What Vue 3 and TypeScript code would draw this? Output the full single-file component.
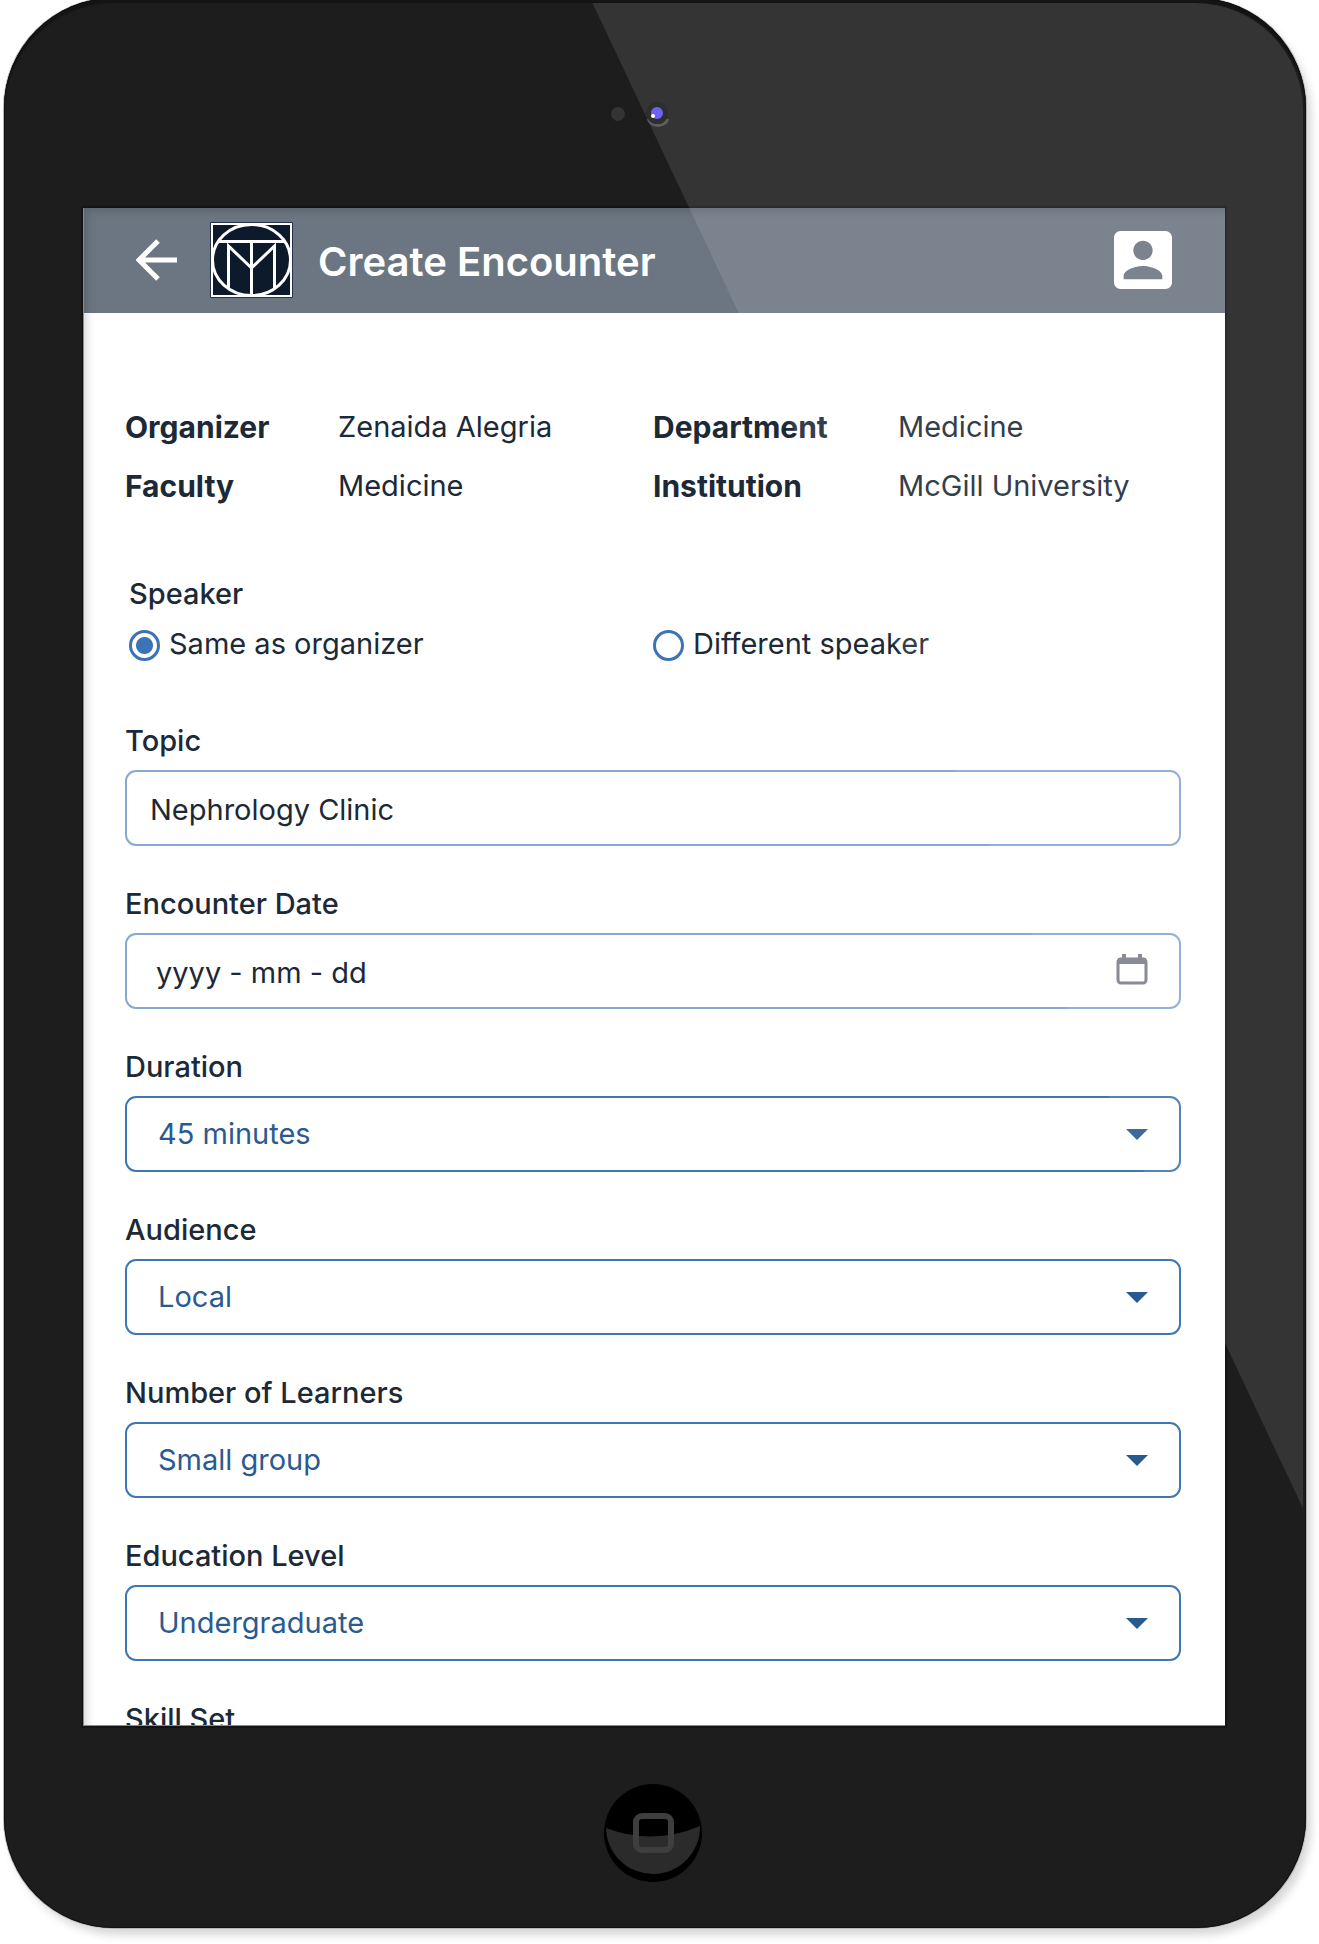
<script setup lang="ts">
import { ref } from 'vue'

interface Detail {
  label: string
  value: string
}

interface SelectField {
  id: string
  label: string
  options: string[]
  value: string
}

const details: Detail[] = [
  { label: 'Organizer', value: 'Zenaida Alegria' },
  { label: 'Department', value: 'Medicine' },
  { label: 'Faculty', value: 'Medicine' },
  { label: 'Institution', value: 'McGill University' },
]

const speaker = ref('same')
const topic = ref('Nephrology Clinic')
const date = ref('')

const selects = ref<SelectField[]>([
  { id: 'duration', label: 'Duration', options: ['45 minutes'], value: '45 minutes' },
  { id: 'audience', label: 'Audience', options: ['Local'], value: 'Local' },
  { id: 'learners', label: 'Number of Learners', options: ['Small group'], value: 'Small group' },
  { id: 'level', label: 'Education Level', options: ['Undergraduate'], value: 'Undergraduate' },
  { id: 'skills', label: 'Skill Set', options: [''], value: '' },
])
</script>

<template>
  <div class="device">
    <div class="bezel-top">
      <svg class="camera" viewBox="0 0 110 30" aria-hidden="true">
        <circle cx="17" cy="15" r="7" fill="#333" />
        <path d="M47 20a11 11 0 0 0 20 0" fill="none" stroke="#4c4c4a" stroke-width="3" />
        <circle cx="56" cy="14" r="11" fill="#171619" />
        <circle cx="56" cy="14" r="6" fill="#5c52f0" />
        <circle cx="52" cy="17" r="2" fill="#fff" />
      </svg>
    </div>

    <main class="screen">
      <header class="bar">
        <button class="back" type="button" aria-label="Back">
          <svg viewBox="0 0 42 42">
            <path d="M41 21H5M22 2 3 21l19 19" fill="none" stroke="#fff" stroke-width="5" />
          </svg>
        </button>
        <svg class="logo" viewBox="0 0 83 76" aria-hidden="true">
          <rect width="83" height="76" rx="1" fill="#26324a" />
          <rect x="2" y="2" width="79" height="72" fill="#0d1a2b" stroke="#fff" stroke-width="2" />
          <g fill="none" stroke="#fff" stroke-width="3">
            <ellipse cx="41.500" cy="38" rx="39" ry="35.500" />
            <path d="M8 19.500H75M41.500 19.500V73M18.500 66V24l23 22 23-22v42" />
          </g>
        </svg>
        <h1>Create Encounter</h1>
        <button class="account" type="button" aria-label="Account">
          <svg viewBox="3 3 18 18">
            <path
              fill="#fff"
              d="M3 5v14a2 2 0 0 0 2 2h14c1.100 0 2-.900 2-2V5a2 2 0 0 0-2-2H5a2 2 0 0 0-2 2zm12 4c0 1.660-1.340 3-3 3s-3-1.340-3-3 1.340-3 3-3 3 1.340 3 3zm-9 8c0-2 4-3.100 6-3.100s6 1.100 6 3.100v1H6v-1z"
            />
          </svg>
        </button>
      </header>

      <form class="form" @submit.prevent>
        <dl class="details">
          <template v-for="d in details" :key="d.label">
            <dt>{{ d.label }}</dt>
            <dd>{{ d.value }}</dd>
          </template>
        </dl>

        <fieldset class="speaker">
          <legend>Speaker</legend>
          <div class="choices">
            <label>
              <input v-model="speaker" type="radio" name="speaker" value="same" />
              <span>Same as organizer</span>
            </label>
            <label>
              <input v-model="speaker" type="radio" name="speaker" value="different" />
              <span>Different speaker</span>
            </label>
          </div>
        </fieldset>

        <div class="field">
          <label for="topic">Topic</label>
          <input id="topic" v-model="topic" class="box" type="text" />
        </div>

        <div class="field">
          <label for="date">Encounter Date</label>
          <div class="control">
            <input id="date" v-model="date" class="box date" type="text" placeholder="yyyy - mm - dd" />
            <button class="calendar" type="button" aria-label="Choose a date">
              <svg viewBox="0 0 32 32">
                <rect x="2" y="6" width="28" height="24" rx="3" fill="none" stroke="#7b7d88" stroke-width="3" />
                <path d="M2 5h28v6H2zM6 1h4v5H6zM22 1h4v5h-4z" fill="#7b7d88" />
              </svg>
            </button>
          </div>
        </div>

        <div v-for="s in selects" :key="s.id" class="field">
          <label :for="s.id">{{ s.label }}</label>
          <div class="control">
            <select :id="s.id" v-model="s.value" class="box select">
              <option v-for="o in s.options" :key="o" :value="o">{{ o }}</option>
            </select>
            <svg class="arrow" viewBox="0 0 22 11" aria-hidden="true">
              <path d="M0 0h22L11 11z" fill="#285a92" />
            </svg>
          </div>
        </div>
      </form>
    </main>

    <div class="bezel-bottom">
      <button class="home" type="button" aria-label="Home">
        <svg viewBox="0 0 98 98">
          <circle cx="49" cy="49" r="49" fill="#000" />
          <path d="M2 44Q49 62 96 42A47 47 0 1 1 2 44z" fill="#2b2b2b" />
          <rect x="32" y="32" width="35" height="34" rx="6" fill="none" stroke="#3e3e3e" stroke-width="6" />
        </svg>
      </button>
    </div>

    <div class="glare"></div>
  </div>
</template>

<style>
body {
  min-height: 100vh;
  background: #fff;
}
</style>

<style scoped>
.device {
  position: relative;
  box-sizing: border-box;
  margin: -2px 13px 0 4px;
  padding: 0 81px 0 79px;
  border-radius: 110px;
  background: #1d1d1d;
  box-shadow:
    inset 0 0 0 1px #111,
    inset 0 5px 1px #141414,
    0 0 0 1px #b5b5b5,
    5px 7px 8px rgba(0, 0, 0, 0.16);
  color: #1c2937;
  font-family: Inter, "Liberation Sans", sans-serif;
  font-size: 29px;
  line-height: 40px;
}

.bezel-top {
  display: flex;
  justify-content: center;
  height: 210px;
  padding-left: 4px;
}

.camera {
  width: 110px;
  height: 30px;
  margin-top: 101px;
}

.screen {
  position: relative;
  aspect-ratio: 1142 / 1518;
  overflow: hidden;
  background: #fff;
  box-shadow: 0 0 0 2px #141414;
}

.screen::after {
  content: "";
  position: absolute;
  inset: 0;
  box-shadow:
    inset 1px -1px 0 #8a8a8a,
    inset 6px 5px 9px -2px rgba(0, 0, 0, 0.16);
  pointer-events: none;
}

.bar {
  display: flex;
  align-items: center;
  box-sizing: border-box;
  height: 105px;
  padding: 0 53px 2px;
  background: #6c7682;
}

button {
  padding: 0;
  border: 0;
  background: none;
}

button svg {
  display: block;
  width: 100%;
  height: 100%;
}

.back {
  width: 42px;
  height: 42px;
}

.logo {
  width: 83px;
  height: 76px;
  margin: 0 25px 0 32px;
}

h1 {
  flex: 1;
  margin: 0;
  padding-top: 4px;
  color: #fff;
  font-size: 40px;
  font-weight: 600;
  line-height: 48px;
}

.account {
  width: 58px;
  height: 58px;
}

.form {
  padding: 84px 44px 0 42px;
}

.details {
  display: grid;
  grid-template-columns: 213fr 315fr 245fr 283fr;
  row-gap: 19px;
  margin: 0;
  padding-top: 10px;
}

dt {
  font-size: 30px;
  font-weight: 700;
}

dd {
  margin: 0;
}

.speaker {
  min-width: 0;
  margin: 68px 0 57px;
  padding: 0;
  border: 0;
}

legend {
  padding: 0 4px;
  font-weight: 500;
}

.choices {
  display: grid;
  grid-template-columns: 1fr 1fr;
  margin-top: 10px;
}

.choices label {
  display: flex;
  align-items: center;
  gap: 9px;
}

.choices label:first-child {
  padding-left: 4px;
}

input[type="radio"] {
  appearance: none;
  box-sizing: border-box;
  width: 31px;
  height: 31px;
  margin: 3px 0 0;
  border: 3px solid #3b73b3;
  border-radius: 50%;
  background: #fff;
}

input[type="radio"]:checked {
  background: radial-gradient(circle, #3b73b3 8px, #fff 9px);
}

.field {
  display: flex;
  flex-direction: column;
  gap: 9px;
  margin-bottom: 38px;
}

.field > label {
  font-weight: 500;
}

.control {
  position: relative;
}

.box {
  display: block;
  box-sizing: border-box;
  width: 100%;
  height: 76px;
  margin: 0;
  padding: 2px 23px 0;
  border: 2px solid #86a9d4;
  border-radius: 11px;
  background: #fff;
  color: inherit;
  font: inherit;
}

.date {
  padding: 2px 29px 0;
}

.date::placeholder {
  color: inherit;
  opacity: 1;
}

.select {
  appearance: none;
  padding: 0 31px;
  border-color: #3f76b4;
  color: #2a5a91;
}

.calendar {
  position: absolute;
  top: 20px;
  right: 33px;
  width: 32px;
  height: 32px;
}

.arrow {
  position: absolute;
  top: 33px;
  right: 33px;
  width: 22px;
  height: 11px;
  pointer-events: none;
}

.bezel-bottom {
  display: flex;
  justify-content: center;
  padding: 58px 2px 46px 0;
}

.home {
  width: 98px;
  height: 98px;
}

/* Diagonal reflection across the glass, from the top edge to the right edge */
.glare {
  position: absolute;
  inset: 5px 3px 0 0;
  border-radius: 0 108px 0 0;
  background: rgba(255, 255, 255, 0.1);
  clip-path: polygon(45.300% 0, 100% 0, 100% 78.200%);
  pointer-events: none;
}
</style>
